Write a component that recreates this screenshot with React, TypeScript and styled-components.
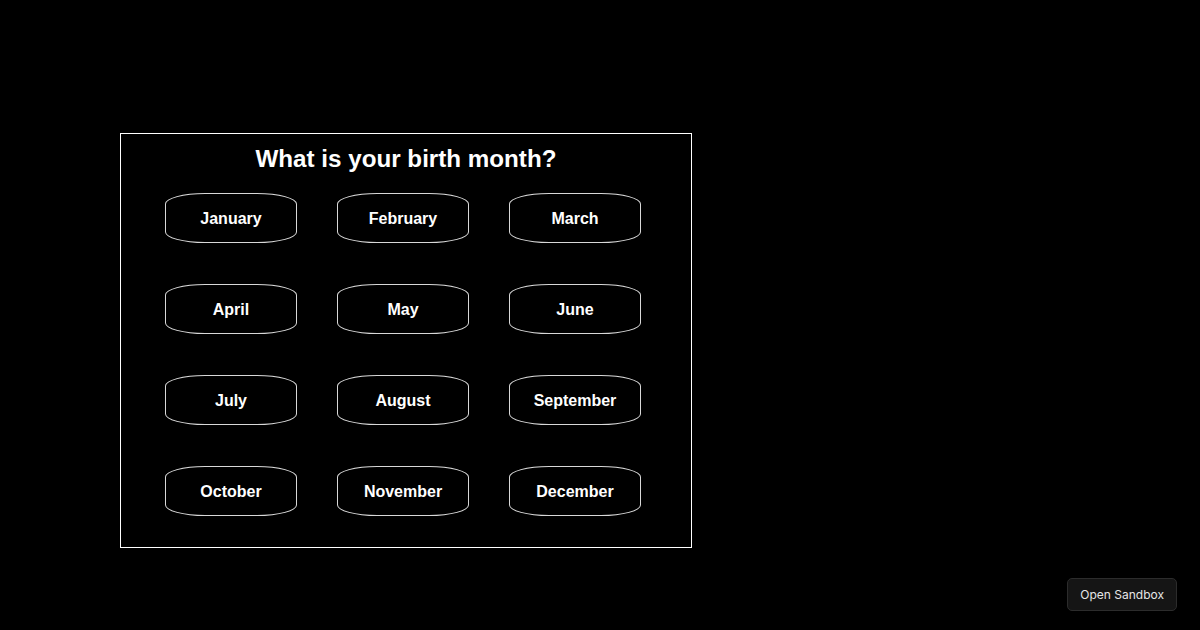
import { createGlobalStyle } from 'styled-components';
import styled from 'styled-components';

const GlobalStyle = createGlobalStyle`
  html, body {
    margin: 0;
    background: #000;
  }
  body {
    font-family: 'Liberation Sans', Arial, sans-serif;
  }
`;

const Page = styled.div`
  width: 1200px;
  height: 630px;
  box-sizing: border-box;
  padding: 133px 0 0 120px;
  background: #000;
`;

const Card = styled.div`
  box-sizing: border-box;
  width: 572px;
  height: 415px;
  border: 1px solid #fff;
  padding: 11px 0 0 44px;
`;

const Title = styled.h2`
  margin: 0 0 20px -44px;
  font-size: 24.2px;
  font-weight: 700;
  line-height: 28px;
  color: #fff;
  text-align: center;
`;

const MonthGrid = styled.div`
  display: grid;
  grid-template-columns: repeat(3, 132px);
  grid-auto-rows: 50px;
  column-gap: 40px;
  row-gap: 41px;
`;

const MonthButton = styled.button`
  box-sizing: border-box;
  width: 132px;
  height: 50px;
  padding: 2px 0 0;
  background: #000;
  color: #fff;
  border: 1px solid #d8d8d8;
  border-radius: 40px / 11px;
  font-family: 'Liberation Sans', Arial, sans-serif;
  font-size: 16px;
  font-weight: 700;
  cursor: pointer;
`;

const SandboxButton = styled.button`
  position: fixed;
  right: 23px;
  bottom: 19px;
  height: 33px;
  padding: 0 12px;
  background: #151515;
  color: #e6e6e6;
  border: 1px solid #2c2c2c;
  border-radius: 5px;
  font-family: Inter, 'Noto Sans', sans-serif;
  font-size: 12px;
`;

const months = [
  'January',
  'February',
  'March',
  'April',
  'May',
  'June',
  'July',
  'August',
  'September',
  'October',
  'November',
  'December',
];

export default function App() {
  return (
    <>
      <GlobalStyle />
      <Page>
        <Card>
          <Title>What is your birth month?</Title>
          <MonthGrid>
            {months.map((m) => (
              <MonthButton key={m}>{m}</MonthButton>
            ))}
          </MonthGrid>
        </Card>
      </Page>
      <SandboxButton>Open Sandbox</SandboxButton>
    </>
  );
}
